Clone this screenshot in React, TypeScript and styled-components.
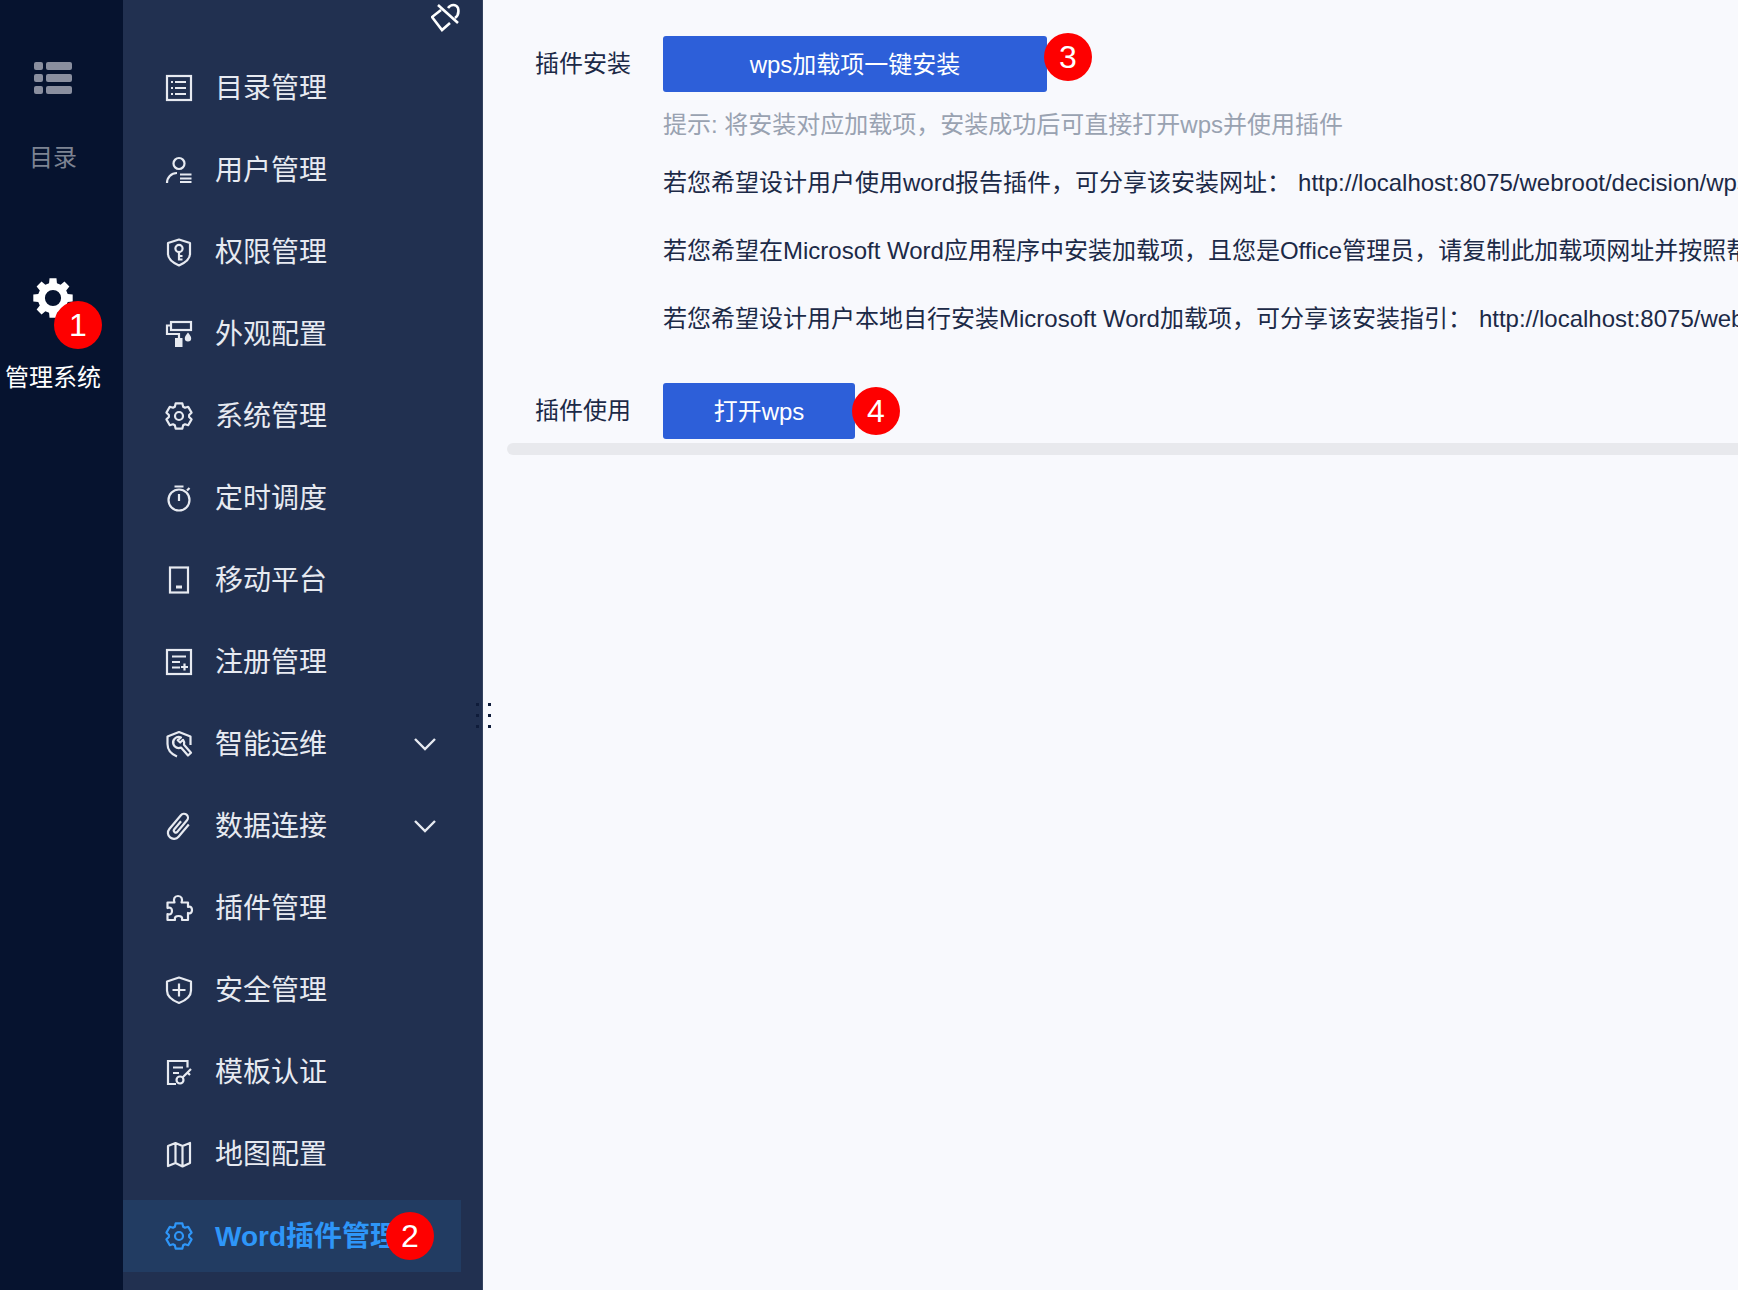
import styled, { createGlobalStyle } from "styled-components";
import { ReactNode } from "react";

const GlobalStyle = createGlobalStyle`
  html, body {
    margin: 0;
    height: 100%;
    overflow: hidden;
    background: #f8f9fd;
    font-family: "Liberation Sans", "Noto Sans CJK SC", sans-serif;
  }
`;

const Layout = styled.div`
  display: flex;
  width: 1738px;
  height: 1290px;
  overflow: hidden;
`;

const Rail = styled.nav`
  flex: 0 0 123px;
  padding: 62px 17px 0 0;
  box-sizing: border-box;
  background: #06132f;
`;

const RailItem = styled.div<{ $active?: boolean }>`
  position: relative;
  display: flex;
  flex-direction: column;
  align-items: center;
  margin-bottom: 104px;
  font-size: 24px;
  line-height: 32px;
  color: ${(p) => (p.$active ? "#ffffff" : "#7e8493")};
`;

const RailIcon = styled.div<{ $h: number }>`
  display: flex;
  height: ${(p) => p.$h}px;
`;

const RailLabel = styled.span<{ $gap: number }>`
  margin-top: ${(p) => p.$gap}px;
  white-space: nowrap;
`;

const Menu = styled.aside`
  position: relative;
  flex: 0 0 360px;
  box-sizing: border-box;
  padding: 52px 21px 0 0;
  background: #213050;
  border-right: 1px solid #34435f;
`;

const PinButton = styled.div`
  position: absolute;
  top: 3px;
  left: 308px;
  line-height: 0;
`;

const MenuList = styled.ul`
  display: flex;
  flex-direction: column;
  gap: 10px;
  margin: 0;
  padding: 0;
  list-style: none;
`;

const MenuRow = styled.li<{ $active?: boolean }>`
  position: relative;
  display: flex;
  align-items: center;
  gap: 23px;
  height: 72px;
  padding: 0 25px 0 43px;
  font-size: 28px;
  font-weight: ${(p) => (p.$active ? 700 : 400)};
  color: ${(p) => (p.$active ? "#2e96f8" : "#e7eaf1")};
  background: ${(p) => (p.$active ? "#223c62" : "transparent")};
  white-space: nowrap;
`;

const MenuText = styled.span`
  flex: 1;
  padding-bottom: 4px;
`;

const Badge = styled.span`
  position: absolute;
  display: flex;
  align-items: center;
  justify-content: center;
  width: 48px;
  height: 48px;
  border-radius: 50%;
  background: #fe0000;
  color: #fff;
  font-size: 32px;
  font-weight: 400;
  line-height: 1;
`;

const RailBadge = styled(Badge)`
  top: 23px;
  left: 54px;
`;

const RowBadge = styled(Badge)`
  top: 12px;
  left: 263px;
`;

const ButtonBadge = styled(Badge)<{ $top: number }>`
  top: ${(p) => p.$top}px;
  right: -45px;
`;

const Handle = styled.div`
  position: absolute;
  top: 703px;
  left: 476px;
  display: grid;
  grid-template-columns: 3px 3px;
  column-gap: 9px;
  row-gap: 8px;
  i {
    width: 3px;
    height: 3px;
    background: #0f1c3a;
  }
`;

const Content = styled.main`
  flex: 1;
  min-width: 0;
  overflow: hidden;
  padding: 36px 0 0 24px;
`;

const FormRow = styled.section`
  display: flex;
  align-items: flex-start;
  padding-left: 28px;
`;

const SecondRow = styled(FormRow)`
  margin-top: 46px;
`;

const Label = styled.div`
  flex: 0 0 128px;
  font-size: 24px;
  line-height: 56px;
  color: #1c2a47;
  white-space: nowrap;
`;

const Field = styled.div`
  flex: 1;
  min-width: 0;
`;

const ButtonWrap = styled.div<{ $w: number }>`
  position: relative;
  width: ${(p) => p.$w}px;
`;

const Button = styled.div`
  display: flex;
  align-items: center;
  justify-content: center;
  box-sizing: border-box;
  height: 56px;
  padding-bottom: 4px;
  border-radius: 3px;
  background: #2d5fd9;
  color: #fff;
  font-size: 24px;
`;

const Hint = styled.div`
  margin-top: 15px;
  font-size: 24px;
  line-height: 36px;
  color: #99a2b1;
  white-space: nowrap;
`;

const Para = styled.div`
  margin-top: 32px;
  font-size: 24px;
  line-height: 36px;
  color: #1c2a47;
  white-space: nowrap;
  ${Hint} + & {
    margin-top: 22px;
  }
  span {
    margin-left: 7px;
  }
`;

const Scrollbar = styled.div`
  height: 12px;
  margin-top: 4px;
  border-radius: 6px 0 0 6px;
  background: #e8e9ed;
`;

function gearPath(teeth: number, c: number, outer: number, inner: number, top: number, base: number) {
  const pts: string[] = [];
  for (let i = 0; i < teeth; i++) {
    const a = -90 + (360 / teeth) * i;
    [[-base, inner], [-top, outer], [top, outer], [base, inner]].forEach(([d, r]) => {
      const t = ((a + d) * Math.PI) / 180;
      pts.push(`${(c + r * Math.cos(t)).toFixed(2)} ${(c + r * Math.sin(t)).toFixed(2)}`);
    });
  }
  return `M${pts.join("L")}Z`;
}

const Svg = styled.svg`
  flex: none;
  overflow: visible;
`;

const Icon = ({ children, color }: { children: ReactNode; color?: string }) => (
  <Svg width="26" height="26" viewBox="0 0 26 26" fill="none" stroke={color || "#e7eaf1"} strokeWidth="2.2">
    {children}
  </Svg>
);

const OutlineGear = ({ color }: { color?: string }) => (
  <Icon color={color}>
    <path d={gearPath(6, 13, 13, 10.2, 15, 24)} strokeLinejoin="round" />
    <circle cx="13" cy="13" r="4" />
  </Icon>
);

const icons: Record<string, ReactNode> = {
  list: (
    <Icon>
      <rect x="1" y="1" width="24" height="24" />
      <path d="M9 7h11M9 13h11M9 19h11M5 7h2M5 13h2M5 19h2" />
    </Icon>
  ),
  user: (
    <Icon>
      <circle cx="13" cy="6.5" r="5.5" />
      <path d="M1 26c0-5.5 4-10 10-10M14 17.5h11.5M14 21.5h11.5M14 25h11.5" />
    </Icon>
  ),
  shield: (
    <Icon>
      <path d="M13 0.5l11 3.5v11c0 5.500-5.500 9-11 11.500C7.500 24 2 20.500 2 15V4z" strokeLinejoin="round" />
      <circle cx="13" cy="9.5" r="3.6" />
      <path d="M13 13v8.500M13 17h3.500M13 20.500h3.500" />
    </Icon>
  ),
  roller: (
    <Icon>
      <rect x="5" y="1" width="20" height="8" />
      <path d="M5 4.500H1V13h12v4" />
      <path d="M9 17h7.500v9H9z" fill="#e7eaf1" stroke="none" />
      <path d="M22 11.500c-2 2.500-3.200 4-3.200 5.800a3.200 3.200 0 0 0 6.400 0c0-1.800-1.200-3.300-3.200-5.800z" fill="#e7eaf1" stroke="none" />
    </Icon>
  ),
  gear: <OutlineGear />,
  timer: (
    <Icon>
      <circle cx="13" cy="15" r="10.5" />
      <path d="M8.500 1.500h9M13 9v7M21 5.500l2.500-2.500" />
    </Icon>
  ),
  phone: (
    <Icon>
      <rect x="4" y="0.5" width="18" height="25" />
      <path d="M10 20h6" strokeWidth="3" />
    </Icon>
  ),
  form: (
    <Icon>
      <rect x="1" y="1" width="24" height="24" />
      <path d="M6 7.500h14M6 13h8M6 18.500h8M15 18h7M18.500 14.500v7" />
    </Icon>
  ),
  ops: (
    <Icon>
      <path d="M11 25.500C5 23 1.500 19 1.500 13V5.500L13 1l11.500 4.500V14" strokeLinejoin="round" />
      <path d="M15 6.500a5.500 5.500 0 0 0-7.500 7 5.500 5.500 0 0 0 7.500 3l7 8 3-2.700-7-8a5.500 5.500 0 0 0-1-5l-2.800 2.700-2.500-2.300z" strokeLinejoin="round" />
    </Icon>
  ),
  clip: (
    <Icon>
      <path
        d="M19.500 5.500V21.500a6 6 0 0 1-12 0V3.500a4 4 0 0 1 8 0V18.500a2 2 0 0 1-4 0V8"
        transform="rotate(40 13 13)"
      />
    </Icon>
  ),
  puzzle: (
    <Icon>
      <path d="M1.500 7.500H8.500C7 4 8.500 1 12 1s5 3 3.500 6.500h6.500V12c3-1 4 1 4 3s-1 4-4 3v7h-6c.8-3-1-4-3.500-4s-4.300 1-3.500 4H1.500v-6c3 1 4.500-.5 4.500-3s-1.500-4-4.500-3z" strokeLinejoin="round" />
    </Icon>
  ),
  shieldPlus: (
    <Icon>
      <path d="M13 0.5L25 4.500v9c0 5.500-5.500 10-12 12.500C6.500 23.500 1 19 1 13.500v-9z" strokeLinejoin="round" />
      <path d="M13 6.500v13M6.500 13h13" />
    </Icon>
  ),
  docKey: (
    <Icon>
      <path d="M21.500 8.500V2H2v23h8M7 8.500h10M7 14h6" />
      <circle cx="14" cy="21" r="3.5" />
      <path d="M16.500 18.500L25 10M21.500 13.500l2.500 2.500" />
    </Icon>
  ),
  map: (
    <Icon>
      <path d="M2 5l7.500-3 7 3L24 2v20l-7.500 3.500-7-3.500L2 25zM9.500 2v20M16.500 5v20.500" strokeLinejoin="round" />
    </Icon>
  ),
};

const menuItems = [
  { text: "目录管理", icon: "list" },
  { text: "用户管理", icon: "user" },
  { text: "权限管理", icon: "shield" },
  { text: "外观配置", icon: "roller" },
  { text: "系统管理", icon: "gear" },
  { text: "定时调度", icon: "timer" },
  { text: "移动平台", icon: "phone" },
  { text: "注册管理", icon: "form" },
  { text: "智能运维", icon: "ops", more: true },
  { text: "数据连接", icon: "clip", more: true },
  { text: "插件管理", icon: "puzzle" },
  { text: "安全管理", icon: "shieldPlus" },
  { text: "模板认证", icon: "docKey" },
  { text: "地图配置", icon: "map" },
];

const Chevron = () => (
  <svg width="22" height="14" viewBox="0 0 22 14" fill="none" stroke="#e7eaf1" strokeWidth="2.4">
    <path d="M1 2l10 10L21 2" />
  </svg>
);

export default function App() {
  return (
    <Layout>
      <GlobalStyle />
      <Rail>
        <RailItem>
          <RailIcon $h={32}>
            <svg width="38" height="32" viewBox="0 0 38 32" fill="#8a8f9f">
              <rect width="9" height="8" rx="2" />
              <rect x="12" width="26" height="8" rx="2" />
              <rect y="12" width="9" height="8" rx="2" />
              <rect x="12" y="12" width="26" height="8" rx="2" />
              <rect y="24" width="9" height="8" rx="2" />
              <rect x="12" y="24" width="26" height="8" rx="2" />
            </svg>
          </RailIcon>
          <RailLabel $gap={48}>目录</RailLabel>
        </RailItem>
        <RailItem $active>
          <RailIcon $h={40}>
            <svg width="42" height="40" viewBox="0 0 42 42" fill="#fff" fillRule="evenodd">
              <path d={`${gearPath(8, 21, 21, 16, 10, 15)}M21 12.5a8.5 8.5 0 1 0 0 17 8.5 8.5 0 0 0 0-17z`} />
            </svg>
          </RailIcon>
          <RailLabel $gap={44}>管理系统</RailLabel>
          <RailBadge>1</RailBadge>
        </RailItem>
      </Rail>
      <Menu>
        <PinButton>
          <svg width="30" height="30" viewBox="0 0 30 30" fill="none" stroke="#fff" strokeWidth="2.6">
            <path d="M7 2L27 20M10 7L1 14 11 27 19 20M17 5C20 1 25 1 27 5 28 9 28 12 24 15" />
          </svg>
        </PinButton>
        <MenuList>
          {menuItems.map((m) => (
            <MenuRow key={m.text}>
              {icons[m.icon]}
              <MenuText>{m.text}</MenuText>
              {m.more && <Chevron />}
            </MenuRow>
          ))}
          <MenuRow $active>
            <OutlineGear color="#2e96f8" />
            <MenuText>Word插件管理</MenuText>
            <RowBadge>2</RowBadge>
          </MenuRow>
        </MenuList>
      </Menu>
      <Handle>
        {Array.from({ length: 6 }, (_, i) => (
          <i key={i} />
        ))}
      </Handle>
      <Content>
        <FormRow>
          <Label>插件安装</Label>
          <Field>
            <ButtonWrap $w={384}>
              <Button>wps加载项一键安装</Button>
              <ButtonBadge $top={-3}>3</ButtonBadge>
            </ButtonWrap>
            <Hint>提示: 将安装对应加载项，安装成功后可直接打开wps并使用插件</Hint>
            <Para>
              若您希望设计用户使用word报告插件，可分享该安装网址：<span>http://localhost:8075/webroot/decision/wps/word/addin</span>
            </Para>
            <Para>若您希望在Microsoft Word应用程序中安装加载项，且您是Office管理员，请复制此加载项网址并按照帮助文档操作</Para>
            <Para>
              若您希望设计用户本地自行安装Microsoft Word加载项，可分享该安装指引：<span>http://localhost:8075/webroot/decision/wps/word/guide</span>
            </Para>
          </Field>
        </FormRow>
        <SecondRow>
          <Label>插件使用</Label>
          <Field>
            <ButtonWrap $w={192}>
              <Button>打开wps</Button>
              <ButtonBadge $top={4}>4</ButtonBadge>
            </ButtonWrap>
          </Field>
        </SecondRow>
        <Scrollbar />
      </Content>
    </Layout>
  );
}
